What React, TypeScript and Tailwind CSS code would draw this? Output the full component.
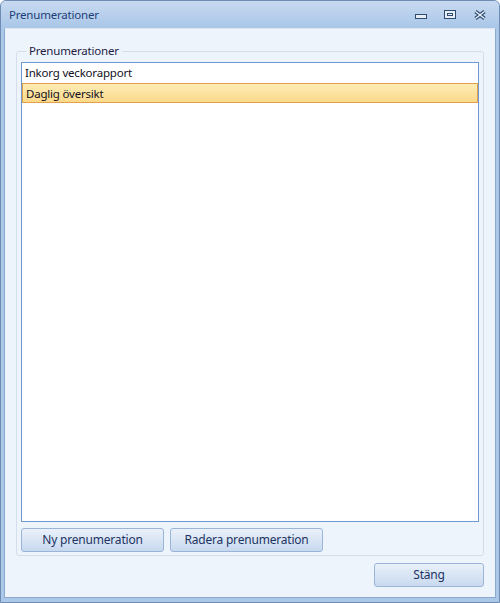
import React from "react";

const items = ["Inkorg veckorapport", "Daglig översikt"];

const WinButton: React.FC<{ label: string; className?: string }> = ({ label, className }) => (
  <button
    className={`h-[24px] rounded-[3px] border border-[#9ab5d7] bg-gradient-to-b from-[#eaf1fa] to-[#c8d9ef] text-[12px] tracking-[-0.2px] text-[#1c3463] ${className ?? ""}`}>
    {label}
  </button>
);

const App: React.FC = () => {
  return (
    <div
      className="w-[500px] h-[603px] flex flex-col bg-[#acc8e9] border border-[#6f8db4] rounded-t-[6px] overflow-hidden"
      style={{ fontFamily: '"Noto Sans", "Open Sans", sans-serif' }}>
      {/* title bar */}
      <div className="h-[27px] flex items-center pl-[8px] bg-gradient-to-b from-[#c8daf0] to-[#a9c6e8]">
        <span className="text-[11.5px] tracking-[-0.2px] text-[#1f3f78]">Prenumerationer</span>
        <div className="ml-auto flex items-center">
          <svg width="12" height="6" viewBox="0 0 12 6" className="mr-[17px] mt-[5px]">
            <rect x="0.5" y="0.5" width="11" height="4" fill="#e8eef6" stroke="#2e4b72" />
          </svg>
          <svg width="12" height="9" viewBox="0 0 12 9" className="mr-[18px]">
            <rect x="0.5" y="0.5" width="11" height="8" fill="#e8eef6" stroke="#2e4b72" />
            <rect x="3.5" y="3.5" width="5" height="2" fill="#e8eef6" stroke="#2e4b72" />
          </svg>
          <svg width="12" height="10" viewBox="0 0 12 10" className="mr-[13px]">
            <path d="M1.5 1.5 L10.5 8.5 M10.5 1.5 L1.5 8.5" stroke="#2e4b72" strokeWidth="3.6" />
            <path d="M1.5 1.5 L10.5 8.5 M10.5 1.5 L1.5 8.5" stroke="#eef3f9" strokeWidth="1.4" />
          </svg>
        </div>
      </div>

      {/* client area */}
      <div className="flex-1 mx-[3px] mb-[4px] border border-[#8ba8ce] border-t-[#dbe6f3] bg-[#eef4fc] flex flex-col px-[11px] pt-[14px]">
        <fieldset className="border border-[#d3deea] rounded-[3px] px-[4px] pb-[3px] pt-[3px]">
          <legend className="ml-[5px] px-[3px] text-[11.5px] tracking-[-0.2px] leading-[16px] text-[#1e1e46]">
            Prenumerationer
          </legend>
          <div className="h-[460px] border border-[#7099d3] bg-white text-[11.5px] tracking-[-0.2px] text-[#111122]">
            {items.map((item, i) => (
              <div
                key={item}
                className={`h-[20px] leading-[20px] pl-[3px] ${
                  i === 1
                    ? "border border-[#e3a04c] bg-gradient-to-b from-[#fdecb5] to-[#fbd98a] pl-[2px] leading-[18px]"
                    : ""
                }`}>
                {item}
              </div>
            ))}
          </div>
          <div className="flex gap-[6px] mt-[6px]">
            <WinButton label="Ny prenumeration" className="w-[143px]" />
            <WinButton label="Radera prenumeration" className="w-[153px]" />
          </div>
        </fieldset>
        <div className="flex justify-end mt-[7px]">
          <WinButton label="Stäng" className="w-[110px]" />
        </div>
      </div>
    </div>
  );
};

export default App;
